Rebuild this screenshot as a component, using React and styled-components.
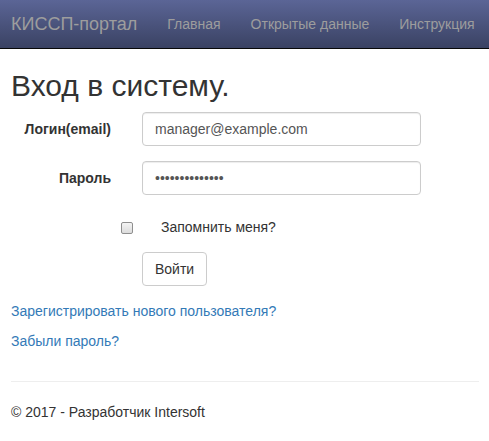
import React from "react";
import styled, { createGlobalStyle } from "styled-components";

const Global = createGlobalStyle`
  html, body { margin: 0; padding: 0; background: #fff; }
  body {
    font-family: "Liberation Sans", Arial, sans-serif;
    font-size: 14px;
    line-height: 20px;
    color: #333;
  }
  * { box-sizing: border-box; }
`;

const Navbar = styled.nav`
  height: 49px;
  background: linear-gradient(to bottom, #5b6596 0%, #3a4263 100%);
  border-bottom: 1px solid #080808;
  display: flex;
  align-items: center;
  padding-left: 11px;
  overflow: hidden;
  white-space: nowrap;
`;

const Brand = styled.a`
  font-size: 18px;
  line-height: 20px;
  color: #9d9d9d;
  text-decoration: none;
  padding-right: 15px;
`;

const NavLink = styled.a`
  font-size: 14px;
  line-height: 20px;
  color: #9d9d9d;
  text-decoration: none;
  padding: 0 15px;
`;

const Content = styled.main`
  padding: 0 10px 0 11px;
`;

const Title = styled.h2`
  font-size: 30px;
  font-weight: 500;
  line-height: 1.1;
  margin: 20px 0 10px;
  color: #333;
`;

const Form = styled.form`
  display: grid;
  grid-template-columns: 116px 1fr;
  row-gap: 15px;
  margin-bottom: 15px;
`;

const Label = styled.label`
  font-weight: bold;
  text-align: right;
  padding: 7px 16px 0 0;
  line-height: 20px;
`;

const Control = styled.div`
  padding-left: 15px;
  grid-column: ${(p) => (p.$offset ? "2" : "auto")};
`;

const Input = styled.input`
  display: block;
  width: 279px;
  height: 34px;
  padding: 6px 12px;
  font-family: "Liberation Sans", Arial, sans-serif;
  font-size: 14px;
  line-height: 20px;
  color: #555;
  background: #fff;
  border: 1px solid #ccc;
  border-radius: 4px;
  box-shadow: inset 0 1px 1px rgba(0, 0, 0, 0.075);
  outline: none;
`;

const CheckRow = styled.label`
  display: flex;
  align-items: center;
  padding-top: 7px;
  line-height: 20px;
  font-weight: normal;
`;

const Check = styled.input`
  appearance: none;
  -webkit-appearance: none;
  width: 12px;
  height: 12px;
  margin: 1px 28px 0 -21px;
  border: 1px solid #8f8f8f;
  border-radius: 2px;
  background: linear-gradient(to bottom, #f4f4f4, #dcdcdc);
`;

const Button = styled.button`
  height: 34px;
  padding: 6px 12px;
  font-family: "Liberation Sans", Arial, sans-serif;
  font-size: 14px;
  line-height: 20px;
  color: #333;
  background: #fff;
  border: 1px solid #ccc;
  border-radius: 4px;
  cursor: pointer;
`;

const Para = styled.p`
  margin: 0 0 10px;
`;

const Link = styled.a`
  color: #337ab7;
  text-decoration: none;
`;

const Rule = styled.hr`
  margin: 30px 0 20px;
  border: 0;
  border-top: 1px solid #eee;
`;

export default function App() {
  return (
    <>
      <Global />
      <Navbar>
        <Brand href="#">КИССП-портал</Brand>
        <NavLink href="#">Главная</NavLink>
        <NavLink href="#">Открытые данные</NavLink>
        <NavLink href="#">Инструкция</NavLink>
      </Navbar>
      <Content>
        <Title>Вход в систему.</Title>
        <Form onSubmit={(e) => e.preventDefault()}>
          <Label htmlFor="email">Логин(email)</Label>
          <Control>
            <Input id="email" type="text" defaultValue="manager@example.com" />
          </Control>
          <Label htmlFor="pwd">Пароль</Label>
          <Control>
            <Input id="pwd" type="password" defaultValue="12345678901234" />
          </Control>
          <Control $offset>
            <CheckRow>
              <Check type="checkbox" />
              Запомнить меня?
            </CheckRow>
          </Control>
          <Control $offset>
            <Button type="submit">Войти</Button>
          </Control>
        </Form>
        <Para>
          <Link href="#">Зарегистрировать нового пользователя?</Link>
        </Para>
        <Para>
          <Link href="#">Забыли пароль?</Link>
        </Para>
        <Rule />
        <footer>
          <Para>© 2017 - Разработчик Intersoft</Para>
        </footer>
      </Content>
    </>
  );
}
